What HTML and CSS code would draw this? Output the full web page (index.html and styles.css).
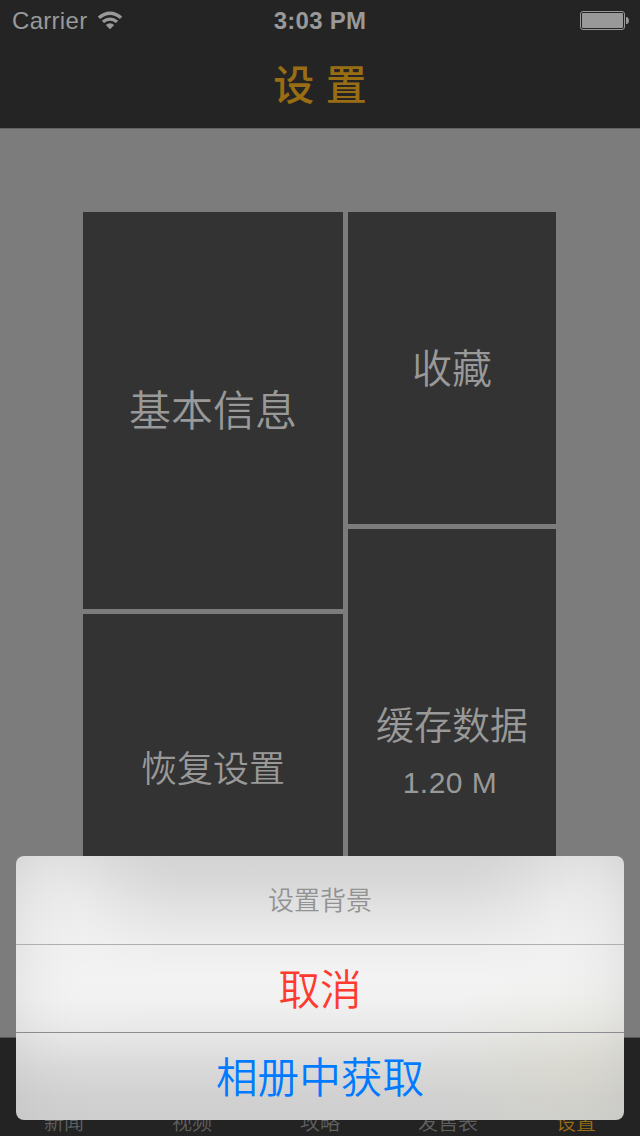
FILE: index.html
```html
<!DOCTYPE html>
<html lang="zh-CN">
<head>
<meta charset="utf-8">
<title>设置</title>
<link rel="stylesheet" href="styles.css">
</head>
<body>
<div class="screen">
  <header class="header">
    <div class="status">
      <div class="status-left">
        <span class="carrier">Carrier</span>
        <svg class="wifi" width="26" height="20" viewBox="0 0 26 20">
          <path d="M0.800 5.500 Q13 -4.300 25.200 5.500 L22.900 7.900 Q13 0.300 3.100 7.900Z"/>
          <path d="M4.800 9.800 Q13 3.200 21.200 9.800 L18.900 12.100 Q13 7.600 7.100 12.100Z"/>
          <path d="M8.800 14.100 Q13 10.400 17.200 14.100 L13 18.300Z"/>
        </svg>
      </div>
      <span class="clock">3:03 PM</span>
      <svg class="battery" width="50" height="20" viewBox="0 0 50 20">
        <rect class="battery-shell" x="0.5" y="0.5" width="44" height="18" rx="2.5"/>
        <rect x="2" y="2" width="41" height="15" rx="1"/>
        <path d="M46 6h1q2 1 2 3.500t-2 3.500h-1z"/>
      </svg>
    </div>
    <h1 class="title">设 置</h1>
  </header>
  <main class="content">
    <div class="column column-wide">
      <div class="tile tile-info">基本信息</div>
      <div class="tile tile-reset">恢复设置</div>
    </div>
    <div class="column column-narrow">
      <div class="tile tile-favorites">收藏</div>
      <div class="tile tile-cache"><span>缓存数据</span><span class="cache-size">1.20 M</span></div>
    </div>
  </main>
  <nav class="tabs">
    <span class="tab">新闻</span>
    <span class="tab">视频</span>
    <span class="tab">攻略</span>
    <span class="tab">发售表</span>
    <span class="tab tab-active">设置</span>
  </nav>
  <section class="sheet">
    <div class="sheet-title">设置背景</div>
    <div class="sheet-action destructive">取消</div>
    <div class="sheet-action">相册中获取</div>
  </section>
</div>
</body>
</html>
```
FILE: styles.css
```css
* { box-sizing: border-box; }
body {
  margin: 0;
  font-family: "Liberation Sans", "Noto Sans CJK SC", sans-serif;
  color: #999;
}
.screen {
  position: relative;
  display: flex;
  flex-direction: column;
  width: 640px;
  height: 1136px;
  overflow: hidden;
  background: #7c7c7c;
}
.header {
  height: 129px;
  background: #242424;
  border-bottom: 1px solid #626262;
}
.status {
  display: grid;
  grid-template-columns: 1fr auto 1fr;
  align-items: center;
  height: 40px;
  padding: 0 10px 0 12px;
}
.status-left { display: flex; align-items: center; gap: 10px; }
.carrier { font-size: 24px; letter-spacing: 0.3px; line-height: 42px; }
.wifi, .battery { display: block; fill: #999; }
.wifi { margin-bottom: 1px; }
.battery { justify-self: end; }
.battery-shell { fill: none; stroke: #999; }
.clock { font-size: 24px; font-weight: 700; letter-spacing: 0.25px; line-height: 42px; margin-right: 2px; }
.title {
  margin: 0;
  padding-top: 2px;
  font-size: 41px;
  font-weight: 500;
  line-height: 88px;
  text-align: center;
  color: #996d13;
}
.content {
  flex: 1;
  display: flex;
  gap: 5px;
  padding: 83px 84px 0 83px;
}
.column { display: flex; flex-direction: column; gap: 5px; }
.column-wide { width: 260px; }
.column-narrow { width: 208px; }
.tile {
  display: flex;
  flex-direction: column;
  align-items: center;
  justify-content: center;
  padding-bottom: 6px;
  background: #333;
  font-weight: 350;
}
.tile-info { height: 397px; font-size: 42px; }
.tile-reset { height: 312px; padding-bottom: 9px; font-size: 36px; }
.tile-favorites { height: 312px; padding-bottom: 5px; font-size: 40px; }
.tile-cache {
  height: 397px;
  justify-content: flex-start;
  padding-top: 169px;
  font-size: 38px;
  line-height: 56px;
}
.cache-size { margin: 1px 4px 0 0; font-size: 30px; font-weight: 400; letter-spacing: 0.5px; }
.tabs {
  display: flex;
  align-items: flex-end;
  height: 99px;
  background: #232323;
  border-top: 1px solid #555;
}
.tab {
  flex: 1;
  font-size: 20px;
  font-weight: 350;
  line-height: 26px;
  text-align: center;
  color: #606060;
}
.tab-active { color: #996d13; }
.sheet {
  position: absolute;
  left: 16px;
  top: 856px;
  width: 608px;
  height: 264px;
  overflow: hidden;
  border-radius: 8px;
  text-align: center;
  background:
    linear-gradient(90deg, rgba(180,180,180,.2), rgba(180,180,180,.09) 22px, rgba(180,180,180,.03) 45px, rgba(180,180,180,0) 70px, rgba(180,180,180,0) 538px, rgba(180,180,180,.03) 563px, rgba(180,180,180,.09) 586px, rgba(180,180,180,.2)),
    radial-gradient(ellipse 160px 110px at 565px 214px, rgba(217,215,192,.35), rgba(217,215,192,.25) 30%, rgba(217,215,192,.06) 75%, rgba(217,215,192,0)),
    radial-gradient(ellipse 150px 150px at 20px 66px, rgba(243,243,243,.75), rgba(243,243,243,.6) 30%, rgba(243,243,243,.2) 65%, rgba(243,243,243,.05) 85%, rgba(243,243,243,0)),
    radial-gradient(ellipse 150px 150px at 588px 66px, rgba(243,243,243,.75), rgba(243,243,243,.6) 30%, rgba(243,243,243,.2) 65%, rgba(243,243,243,.05) 85%, rgba(243,243,243,0)),
    linear-gradient(#d4d4d4 0, #d8d8d8 25px, #e1e1e1 50px, #ededed 88px, #f3f3f3 120px, #f2f2f2 140px, #e9e9e9 172px, #dadada 210px, #d1d1d1 240px, #cecece 264px);
}
.sheet-title {
  height: 88px;
  font-size: 26px;
  font-weight: 350;
  line-height: 90px;
  color: #929292;
}
.sheet-action {
  height: 88px;
  border-top: 1px solid #8c8c90;
  font-size: 41.6px;
  font-weight: 350;
  line-height: 92px;
  color: #007aff;
}
.destructive { border-top-color: #afafaf; color: #ff3b30; }
```
